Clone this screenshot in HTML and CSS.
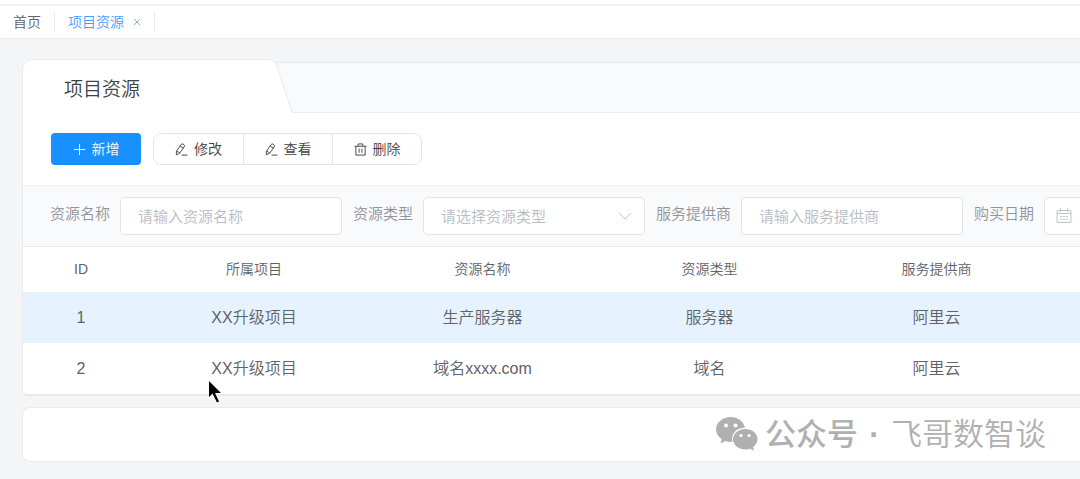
FILE: index.html
```html
<!DOCTYPE html>
<html lang="zh-CN">
<head>
<meta charset="utf-8">
<title>项目资源</title>
<link rel="stylesheet" href="styles.css">
</head>
<body>
<nav class="tabs">
  <a class="tab" href="#home">首页</a>
  <span class="tab tab-active"><a class="tab-link" href="#resource">项目资源</a><button class="tab-close" type="button" aria-label="关闭"><svg width="8" height="8" viewBox="0 0 8 8"><path d="M1 1l6 6M7 1l-6 6"/></svg></button></span>
</nav>
<main class="page">
  <section class="panel">
    <header class="panel-head">
      <h1 class="panel-title">项目资源</h1>
      <svg class="slope" width="18" height="51" viewBox="0 0 18 51"><path class="slope-back" d="M0 1H18V50H16z"/><path class="slope-line" d="M0 .5H18M0 1L16 50.5H18"/></svg>
      <div class="panel-strip"></div>
    </header>
    <div class="toolbar">
      <button class="btn btn-primary" type="button"><svg class="icon" viewBox="0 0 14 14"><path d="M7 1v12M1 7h12"/></svg>新增</button>
      <div class="btn-group">
        <button class="btn" type="button"><svg class="icon" viewBox="0 0 14 14"><path d="M1.500 9L6.600 1.600Q7.500 .5 8.700 1.200L9.700 1.900Q10.800 2.800 10 4L5 11L1.500 12.800zM5.500 3.200L9.200 5.600M1.500 9Q3.800 9 5 11M7 13H13.500"/></svg>修改</button>
        <button class="btn" type="button"><svg class="icon" viewBox="0 0 14 14"><path d="M1.500 9L6.600 1.600Q7.500 .5 8.700 1.200L9.700 1.900Q10.800 2.800 10 4L5 11L1.500 12.800zM5.500 3.200L9.200 5.600M1.500 9Q3.800 9 5 11M7 13H13.500"/></svg>查看</button>
        <button class="btn" type="button"><svg class="icon" viewBox="0 0 14 14"><path d="M.5 3.500H13.500M4.500 3.500V1H9.500V3.500M2 3.500V13H12V3.500M5.500 6V10.500M8.500 6V10.500"/></svg>删除</button>
      </div>
    </div>
    <form class="filters">
      <label class="label" for="name">资源名称</label>
      <input class="field" id="name" type="text" placeholder="请输入资源名称">
      <label class="label" for="type">资源类型</label>
      <span class="field-wrap"><select class="field field-select" id="type"><option>请选择资源类型</option></select><svg class="chevron" width="14" height="14" viewBox="0 0 14 14"><path d="M1 4l6 6 6-6"/></svg></span>
      <label class="label" for="vendor">服务提供商</label>
      <input class="field" id="vendor" type="text" placeholder="请输入服务提供商">
      <label class="label" for="date">购买日期</label>
      <span class="field-wrap"><input class="field field-date" id="date" type="text" placeholder="开始日期"><svg class="calendar" width="16" height="16" viewBox="0 0 16 16"><path d="M1 2.5H15V14.5H1zM1 5.5H15M4.5 0V4M11.5 0V4"/><path d="M4 8.5H6M7 8.5H9M10 8.5H12M4 11.5H6M7 11.5H9M10 11.5H12"/></svg></span>
    </form>
    <table class="table">
      <colgroup><col class="col-id"><col class="col-project"><col class="col"><col class="col"><col class="col"><col></colgroup>
      <thead><tr><th>ID</th><th>所属项目</th><th>资源名称</th><th>资源类型</th><th>服务提供商</th><th></th></tr></thead>
      <tbody>
        <tr class="row-current"><td>1</td><td>XX升级项目</td><td>生产服务器</td><td>服务器</td><td>阿里云</td><td></td></tr>
        <tr><td>2</td><td>XX升级项目</td><td>域名xxxx.com</td><td>域名</td><td>阿里云</td><td></td></tr>
      </tbody>
    </table>
  </section>
  <footer class="footer">
    <svg class="wechat" width="42" height="35" viewBox="0 0 42 35"><path fill="#b0b0b0" d="M14.500 0C6.800 0 0 5.500 0 12.500C0 16.500 2.300 19.800 5.800 22L4.500 26.500L9.500 24Q12.500 25 15.500 24.900L16.500 24.800C14.500 17 20.500 10.800 29 10.800C27.500 4.500 22 0 14.500 0z"/><path fill="#b0b0b0" d="M29.500 12C22.500 12 17 16.500 17 22.200C17 28 22.500 32.500 29.500 32.500Q32.200 32.500 34.300 31.700L38 33.800L37 30C39.700 28 41.500 25.300 41.500 22.200C41.500 16.500 36.500 12 29.500 12z"/><g fill="#fff"><circle cx="10" cy="8.500" r="2"/><circle cx="19.500" cy="8.500" r="2"/><circle cx="25" cy="18.500" r="1.600"/><circle cx="33" cy="18.500" r="1.600"/></g></svg>
    <span class="brand-kind">公众号</span><span class="brand-dot">·</span><span class="brand-name">飞哥数智谈</span>
  </footer>
</main>
<svg class="cursor" width="14" height="23" viewBox="0 0 14 23"><path d="M1 0V16L4.500 12.500L9 21.500L11 20.500L7 12H13z"/></svg>
</body>
</html>
```
FILE: styles.css
```css
* { box-sizing: border-box; }
body {
  margin: 0;
  padding-top: 4px;
  min-height: 100vh;
  overflow: hidden;
  background: #f4f5f7;
  color: #606266;
  font: 350 14px/20px "Liberation Sans", "Noto Sans CJK SC", sans-serif;
  box-shadow: inset 0 4px #fff;
}
svg { fill: none; stroke: currentColor; flex: none; }
button, input, select { font: inherit; }
a { color: inherit; text-decoration: none; }

.tabs {
  display: flex;
  align-items: center;
  height: 35px;
  padding-bottom: 1px;
  border-top: 2px solid #f0f1f4;
  border-bottom: 1px solid #e8eaee;
  background: #fff;
}
.tab { padding: 0 13px; border-right: 1px solid #e8eaee; }
.tab-active { display: flex; align-items: center; gap: 9px; color: #409eff; }
.tab-close { display: flex; padding: 0; border: 0; background: none; color: #7eb2f0; }

.page { padding: 20px 0 18px 22px; }
.panel {
  border-left: 1px solid #e8eaee;
  border-bottom: 2px solid #e8eaee;
  border-radius: 10px 0 0 6px;
  background: #fff;
  overflow: hidden;
}
.panel-head { display: flex; align-items: flex-end; background: #f4f5f7; }
.panel-title {
  margin: 0;
  width: 253px;
  height: 54px;
  padding: 16px 41px;
  border-top: 1px solid #e8eaee;
  border-radius: 10px 8px 0 0;
  background: #fff;
  color: #404144;
  font-size: 19px;
  font-weight: 350;
  line-height: 28px;
}
.slope { background: #fff; }
.slope-back { fill: #f9fafc; stroke: none; }
.slope-line { stroke: #e8eaee; }
.panel-strip {
  flex: 1;
  height: 51px;
  border-top: 1px solid #e8eaee;
  border-bottom: 1px solid #e8eaee;
  background: #f9fafc;
}

.toolbar { display: flex; gap: 12px; padding: 20px 28px; }
.btn {
  display: flex;
  align-items: center;
  justify-content: center;
  gap: 6px;
  width: 90px;
  height: 32px;
  padding: 0;
  border: 0;
  background: #fff;
  color: #404144;
}
.icon { width: 13px; height: 13px; }
.btn-primary { border-radius: 4px; background: #1890ff; color: #fff; }
.btn-group { display: flex; border: 1px solid #e1e3e8; border-radius: 8px; overflow: hidden; }
.btn-group .btn { width: 89px; height: 30px; }
.btn + .btn { border-left: 1px solid #e1e3e8; }

.filters {
  display: flex;
  align-items: center;
  gap: 10px;
  height: 62px;
  padding-left: 26px;
  border-top: 1px solid #f0f1f4;
  border-bottom: 1px solid #e8eaee;
  background: #f9fafc;
  font-size: 15px;
}
.label { flex: none; padding: 0 0 4px 1px; color: #909399; }
.field-wrap { position: relative; flex: none; }
.field {
  display: block;
  flex: none;
  width: 222px;
  height: 38px;
  padding: 0 17px;
  border: 1px solid #e1e3e8;
  border-radius: 5px;
  background: #fff;
}
.field::placeholder { color: #b8bcc5; opacity: 1; }
.field-select { padding-top: 2px; appearance: none; color: #b8bcc5; }
.field-date { padding-left: 34px; }
.chevron, .calendar { position: absolute; top: 12px; color: #c0c4cc; }
.chevron { right: 13px; }
.calendar { left: 12px; top: 11px; }

.table { width: 100%; table-layout: fixed; border-collapse: collapse; text-align: center; }
.col-id { width: 116px; }
.col-project { width: 230px; }
.col { width: 227px; }
th { height: 45px; padding: 0; border-bottom: 1px solid #ebeef2; font-weight: 350; }
td { height: 51px; padding: 0; font-size: 16px; }
.row-current { background: #e6f3ff; }

.footer {
  display: flex;
  align-items: center;
  justify-content: flex-end;
  height: 55px;
  margin-top: 11px;
  padding-right: 34px;
  border: 1px solid #e8eaee;
  border-right: 0;
  border-radius: 8px 0 0 8px;
  background: #fff;
  color: #b0b0b0;
  font-size: 31px;
  line-height: 40px;
}
.wechat { stroke: none; margin-right: 7px; }
.brand-kind { font-weight: 500; }
.brand-dot { width: 33px; text-align: center; font-weight: 700; }
.cursor { position: absolute; left: 208px; top: 381px; fill: #000; stroke: none; }
```
